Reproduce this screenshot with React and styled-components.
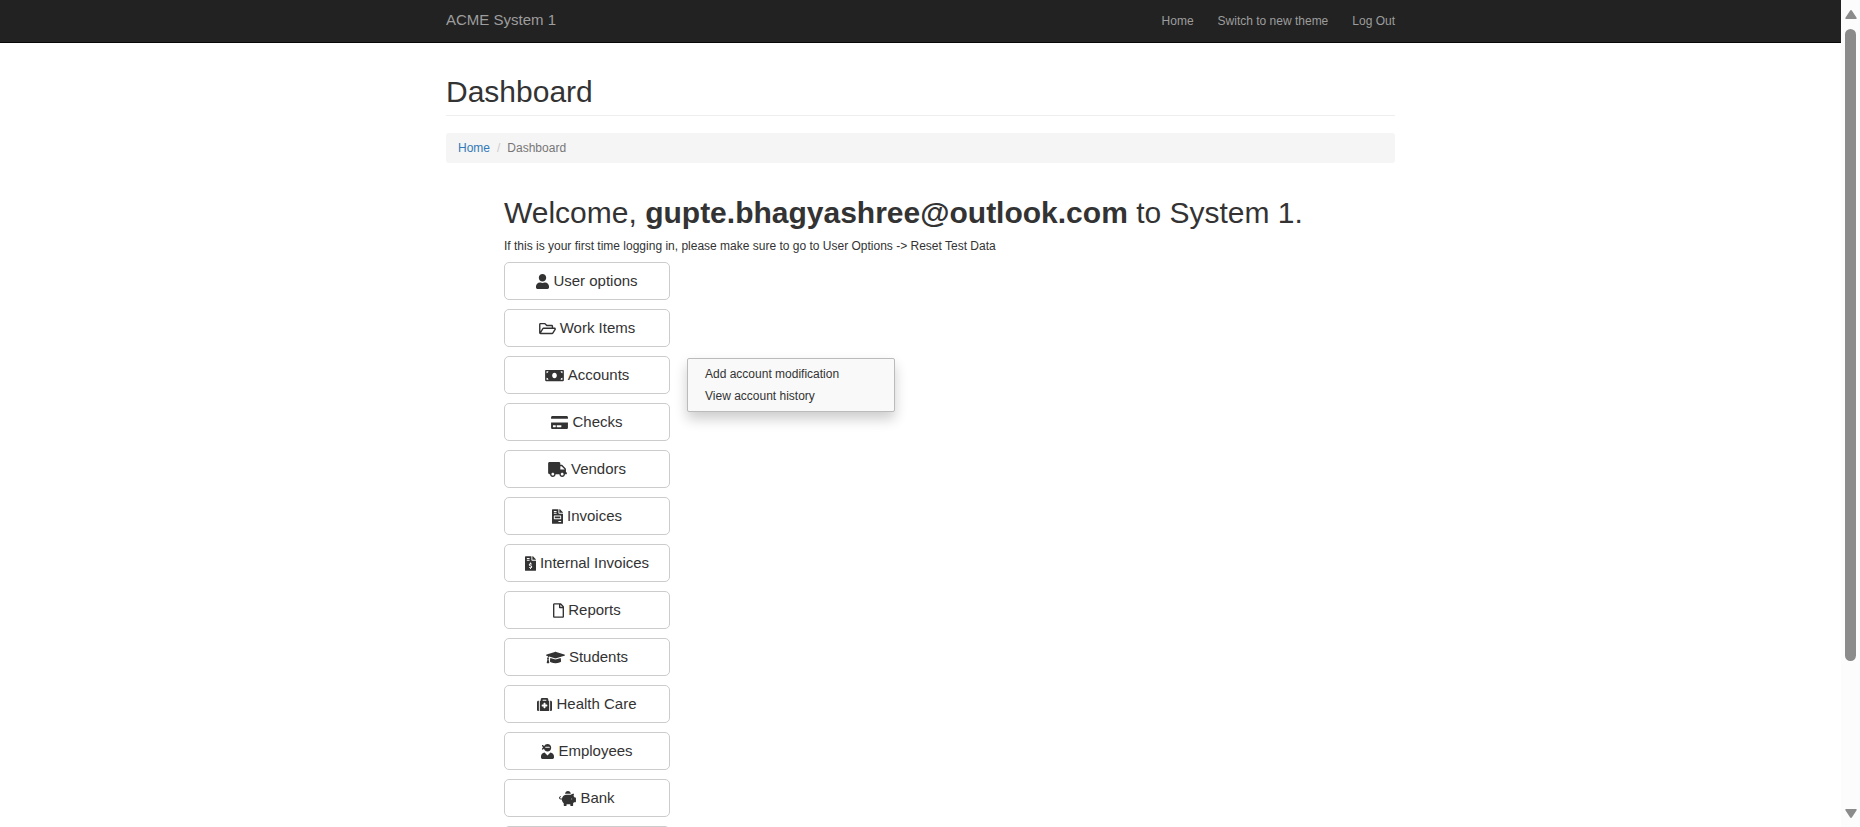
import React from 'react';
import styled, { createGlobalStyle } from 'styled-components';
import {
  FaUser, FaRegFolderOpen, FaMoneyBill, FaCreditCard, FaTruck, FaFileInvoice,
  FaFileInvoiceDollar, FaRegFile, FaGraduationCap, FaMedkit, FaUserNinja, FaPiggyBank,
} from 'react-icons/fa';

const GlobalStyle = createGlobalStyle`
  *, *::before, *::after { box-sizing: border-box; }
  body {
    margin: 0;
    background: #fff;
    color: #333;
    font-family: "Liberation Sans", Arial, sans-serif;
    font-size: 12px;
    line-height: 17px;
  }
  a { text-decoration: none; }
`;

const Viewport = styled.div`
  display: grid;
  grid-template-columns: minmax(0, 1fr) 19px;
  height: 100vh;
  overflow: hidden;
`;

const Page = styled.div`
  min-height: 0;
  overflow: hidden;
`;

const Container = styled.div`
  width: 100%;
  max-width: 949px;
  margin: 0 auto;
`;

const Navbar = styled.header`
  background: #222;
  border-bottom: 1px solid #080808;
`;

const NavRow = styled(Container)`
  display: flex;
  align-items: baseline;
  justify-content: space-between;
  height: 42px;
  padding-top: 11px;
`;

const Brand = styled.a`
  color: #9d9d9d;
  font-size: 15px;
`;

const NavLinks = styled.nav`
  display: flex;
  gap: 24px;
`;

const NavLink = styled.a`
  color: #9d9d9d;
`;

const Title = styled.h1`
  margin: 32px 0 17px;
  padding-bottom: 7px;
  border-bottom: 1px solid #eee;
  font-size: 30px;
  line-height: 33px;
  font-weight: 400;
`;

const Breadcrumb = styled.ol`
  display: flex;
  margin: 0 0 33px;
  padding: 7px 12px 6px;
  list-style: none;
  background: #f5f5f5;
  border-radius: 3px;
`;

const Crumb = styled.li`
  color: #777;
  & + &::before {
    content: "/";
    padding: 0 7px;
    color: #ccc;
  }
`;

const CrumbLink = styled.a`
  color: #337ab7;
`;

const Main = styled.main`
  padding-left: 58px;
`;

const Welcome = styled.h2`
  margin: 0 0 9px;
  font-size: 30px;
  line-height: 33px;
  font-weight: 400;
`;

const Hint = styled.p`
  margin: 0 0 7px;
`;

const Menu = styled.ul`
  display: flex;
  flex-direction: column;
  gap: 9px;
  width: 166px;
  margin: 0;
  padding: 0;
  list-style: none;
`;

const MenuItem = styled.li`
  position: relative;
`;

const MenuButton = styled.button`
  display: flex;
  align-items: center;
  justify-content: center;
  gap: 4px;
  width: 100%;
  height: 38px;
  padding: 0;
  border: 1px solid #ccc;
  border-radius: 5px;
  background: #fff;
  color: #333;
  font: 15px/20px "Liberation Sans", Arial, sans-serif;
  white-space: nowrap;

  svg {
    flex: none;
    width: ${({ $iconWidth }) => $iconWidth}px;
    height: 15px;
  }
`;

const Submenu = styled.ul`
  position: absolute;
  top: 2px;
  left: calc(100% + 17px);
  width: 208px;
  margin: 0;
  padding: 4px 0;
  list-style: none;
  background: #f9f9f9;
  border: 1px solid #bbb;
  border-radius: 2px;
  box-shadow: 0 7px 13px rgba(0, 0, 0, 0.2);
`;

const SubmenuLink = styled.a`
  display: block;
  padding: 0 17px;
  color: #333;
  line-height: 22px;
`;

const Scrollbar = styled.div`
  display: flex;
  flex-direction: column;
  align-items: center;
  padding: 10px 0 9px;
  background: #fcfcfc;
`;

const Arrow = styled.svg`
  display: block;
  width: 12px;
  height: 9px;
  fill: #8b8b8b;
`;

const Track = styled.div`
  flex: 1;
  width: 11px;
  padding: 10px 0 9px;
`;

const Thumb = styled.div`
  height: 82%;
  border-radius: 6px;
  background: #8b8b8b;
`;

const items = [
  { label: 'User options', Icon: FaUser, iconWidth: 13 },
  { label: 'Work Items', Icon: FaRegFolderOpen, iconWidth: 17 },
  {
    label: 'Accounts',
    Icon: FaMoneyBill,
    iconWidth: 19,
    links: ['Add account modification', 'View account history'],
  },
  { label: 'Checks', Icon: FaCreditCard, iconWidth: 17 },
  { label: 'Vendors', Icon: FaTruck, iconWidth: 19 },
  { label: 'Invoices', Icon: FaFileInvoice, iconWidth: 11 },
  { label: 'Internal Invoices', Icon: FaFileInvoiceDollar, iconWidth: 11 },
  { label: 'Reports', Icon: FaRegFile, iconWidth: 11 },
  { label: 'Students', Icon: FaGraduationCap, iconWidth: 19 },
  { label: 'Health Care', Icon: FaMedkit, iconWidth: 15 },
  { label: 'Employees', Icon: FaUserNinja, iconWidth: 13 },
  { label: 'Bank', Icon: FaPiggyBank, iconWidth: 17 },
];

export default function App() {
  return (
    <Viewport>
      <GlobalStyle />
      <Page>
        <Navbar>
          <NavRow>
            <Brand href="#">ACME System 1</Brand>
            <NavLinks>
              <NavLink href="#">Home</NavLink>
              <NavLink href="#">Switch to new theme</NavLink>
              <NavLink href="#">Log Out</NavLink>
            </NavLinks>
          </NavRow>
        </Navbar>
        <Container>
          <Title>Dashboard</Title>
          <Breadcrumb>
            <Crumb><CrumbLink href="#">Home</CrumbLink></Crumb>
            <Crumb>Dashboard</Crumb>
          </Breadcrumb>
          <Main>
            <Welcome>
              Welcome, <strong>gupte.bhagyashree@outlook.com</strong> to System 1.
            </Welcome>
            <Hint>
              If this is your first time logging in, please make sure to go to User Options -&gt; Reset Test Data
            </Hint>
            <Menu>
              {items.map(({ label, Icon, iconWidth, links }) => (
                <MenuItem key={label}>
                  <MenuButton type="button" $iconWidth={iconWidth}><Icon />{label}</MenuButton>
                  {links && (
                    <Submenu>
                      {links.map((text) => (
                        <li key={text}><SubmenuLink href="#">{text}</SubmenuLink></li>
                      ))}
                    </Submenu>
                  )}
                </MenuItem>
              ))}
              <MenuItem>
                <MenuButton type="button" aria-label="More" />
              </MenuItem>
            </Menu>
          </Main>
        </Container>
      </Page>
      <Scrollbar>
        <Arrow viewBox="0 0 12 9"><path d="M6 0 Q6.6 0 7 .7 L11.6 7.8 Q12 9 11 9 H1 Q0 9 .4 7.8 L5 .7 Q5.4 0 6 0Z" /></Arrow>
        <Track><Thumb /></Track>
        <Arrow viewBox="0 0 12 9"><path d="M6 9 Q6.6 9 7 8.3 L11.6 1.2 Q12 0 11 0 H1 Q0 0 .4 1.2 L5 8.3 Q5.4 9 6 9Z" /></Arrow>
      </Scrollbar>
    </Viewport>
  );
}
